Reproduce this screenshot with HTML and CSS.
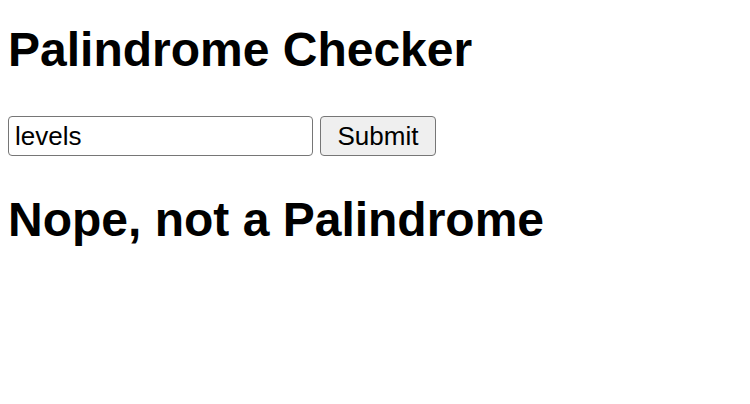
FILE: index.html
```html
<!DOCTYPE html>
<html lang="en">
<head>
<meta charset="utf-8">
<title>Palindrome Checker</title>
<link rel="stylesheet" href="styles.css">
</head>
<body>
<h1 class="title">Palindrome Checker</h1>
<form class="checker">
  <input class="word" type="text" value="levels">
  <button class="submit" type="button">Submit</button>
</form>
<h1 class="result">Nope, not a Palindrome</h1>
</body>
</html>
```
FILE: styles.css
```css
html, body {
  margin: 0;
  background: #fff;
}
body {
  padding: 0 8px;
  font-family: "Liberation Sans", Arial, Helvetica, sans-serif;
  color: #000;
}
.title, .result {
  font-size: 48px;
  font-weight: bold;
  line-height: normal;
  margin: 0;
}
.title {
  padding-top: 22px;
}
.checker {
  display: flex;
  gap: 7px;
  margin-top: 39px;
}
.word, .submit {
  box-sizing: border-box;
  height: 40px;
  font-family: "Liberation Sans", Arial, Helvetica, sans-serif;
  font-size: 26px;
  color: #000;
  border: 1px solid #767676;
  border-radius: 4px;
  margin: 0;
}
.word {
  width: 305px;
  padding: 0 6px;
  background: #fff;
}
.submit {
  width: 116px;
  padding: 0;
  background: #efefef;
}
.result {
  margin-top: 36px;
}
```
